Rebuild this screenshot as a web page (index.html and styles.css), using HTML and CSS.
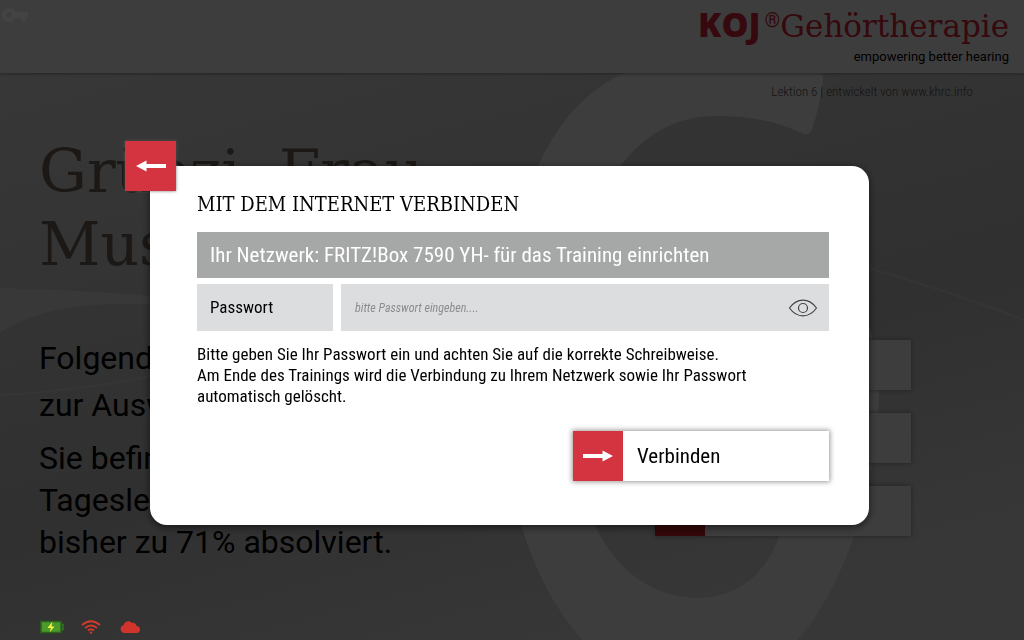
FILE: index.html
```html
<!DOCTYPE html>
<html lang="de">
<head>
<meta charset="utf-8">
<meta name="viewport" content="width=device-width, initial-scale=1">
<title>KOJ Gehörtherapie</title>
<link rel="stylesheet" href="styles.css">
</head>
<body>
<div class="page">
  <header class="header">
    <div class="logo"><span class="logo-mark">KOJ</span><span class="logo-reg">®</span><span class="logo-name">Gehörtherapie</span></div>
    <p class="tagline">empowering better hearing</p>
  </header>
  <main class="main">
    <svg class="backdrop" viewBox="0 0 1024 567" preserveAspectRatio="xMaxYMin slice" aria-hidden="true">
      <path d="M0 215Q80 217 150 223H600V231H150C70 229 30 240 0 260Z" fill="#fff" opacity=".5"/>
      <path d="M0 322Q80 318 150 303" fill="none" stroke="#fff" stroke-width="2" opacity=".3"/>
      <path d="M868 195Q950 218 1024 247" fill="none" stroke="#fff" stroke-width="2" opacity=".3"/>
      <path fill="#fff" d="M625 0H819Q824 1 823 7Q819 37 812 56Q809 63 804 61C770 45 740 43 716 43C640 43 590 110 575 220C620 170 670 150 730 150C820 150 879 220 879 320C879 440 815 620 695 620C575 620 495 470 502 290C505 130 550 32 625 0ZM697 525C760 525 792 470 792 380C792 300 760 250 700 250C640 250 580 300 580 380C580 460 630 525 697 525Z"/>
    </svg>
    <p class="lesson">Lektion 6 | entwickelt von www.khrc.info</p>
    <div class="columns">
      <section class="intro">
        <h1 class="greeting">Grüezi, Frau<br>Muster</h1>
        <p class="options">Folgende<br>zur Auswahl</p>
        <p class="progress">Sie befinden<br>Tageslektion<br>bisher zu 71% absolviert.</p>
      </section>
      <div class="tiles">
        <div class="tile"></div><div class="tile"></div><div class="tile"></div>
      </div>
    </div>
  </main>
</div>

<div class="overlay">
  <form class="dialog" role="dialog" aria-modal="true" aria-labelledby="dialog-title">
    <button class="back" type="button" aria-label="Zurück">
      <svg class="arrow" viewBox="0 0 32 12" aria-hidden="true"><path d="M1 6 11.500 .5V4H31V8H11.500V11.500Z"/></svg>
    </button>
    <h2 class="title" id="dialog-title">MIT DEM INTERNET VERBINDEN</h2>
    <p class="network">Ihr Netzwerk: FRITZ!Box 7590 YH- für das Training einrichten</p>
    <div class="field">
      <label class="field-label" for="password">Passwort</label>
      <div class="field-box">
        <input class="field-input" id="password" type="password" placeholder="bitte Passwort eingeben....">
        <button class="reveal" type="button" aria-label="Passwort anzeigen">
          <svg class="eye" viewBox="0 0 30 20" aria-hidden="true"><path d="M1.500 10C9-.5 21-.5 28.500 10 21 20.500 9 20.500 1.500 10Z"/><circle cx="15" cy="10" r="4.500"/></svg>
        </button>
      </div>
    </div>
    <p class="hint">Bitte geben Sie Ihr Passwort ein und achten Sie auf die korrekte Schreibweise.<br>Am Ende des Trainings wird die Verbindung zu Ihrem Netzwerk sowie Ihr Passwort<br>automatisch gelöscht.</p>
    <button class="connect" type="submit">
      <span class="connect-icon"><svg class="arrow" viewBox="0 0 32 12" aria-hidden="true"><path d="M31 6 20.500 .5V4H1V8H20.500V11.500Z"/></svg></span>
      <span class="connect-text">Verbinden</span>
    </button>
  </form>
</div>

<svg class="key" viewBox="0 0 28 16" aria-hidden="true"><path fill-rule="evenodd" d="M8 1a7 7 0 1 0 6.300 10H20v3h5v-3h2V5H14.300A7 7 0 0 0 8 1Zm0 4a3 3 0 1 1 0 6 3 3 0 0 1 0-6Z"/></svg>
<div class="status">
  <svg class="status-icon" viewBox="0 0 24 14" role="img" aria-label="Akku lädt"><rect x="1" y="1.500" width="20" height="11" fill="#4b9a2b" stroke="#2b611a" stroke-width="1.500"/><path d="M21.500 4.500h1.500v5h-1.500" fill="none" stroke="#2f7a1c" stroke-width="1.500"/><path d="M12.500 1.500 7.500 8H11L9.500 12.500 14.500 6.500H11.500Z" fill="#f4f23c"/></svg>
  <svg class="status-icon" viewBox="0 0 24 14" role="img" aria-label="WLAN"><g fill="none" stroke="#d23a2c" stroke-width="1.800"><path d="M3 5Q12-2.500 21 5"/><path d="M6 8Q12 3 18 8"/><path d="M9 10.500Q12 8.200 15 10.500"/></g><circle cx="12" cy="12.600" r="1.200" fill="#d23a2c"/></svg>
  <svg class="status-icon" viewBox="0 0 24 14" role="img" aria-label="Cloud"><path d="M6 13A4 4 0 0 1 5.500 5.200C6.500 1.500 11-.2 14 3 16 2.300 18.500 3.800 18.500 6A3.500 3.500 0 0 1 18.500 13Z" fill="#d0342a"/></svg>
</div>
</body>
</html>
```
FILE: styles.css
```css
* { box-sizing: border-box; }
body, h1, h2, p { margin: 0; font-weight: 400; }
body { font-family: Roboto, "Noto Sans", sans-serif; color: #000; background: #e0e0e0; }
button, input { border: 0; border-radius: 0; padding: 0; font: inherit; color: inherit; background: none; }
button { cursor: pointer; }

.page { height: 100vh; display: flex; flex-direction: column; overflow: hidden; isolation: isolate; }

.header {
  display: flex; flex-direction: column; align-items: flex-end;
  height: 73px; padding: 4px 15px 0; background: #fff;
  box-shadow: 0 1px 3px #999; z-index: 1;
}
.logo { display: flex; align-items: baseline; height: 44px; color: #dc2838; line-height: 40px; }
.logo-mark { font-family: "Open Sans", sans-serif; font-weight: 800; font-size: 34px; }
.logo-reg { margin-left: 4px; font-size: 20px; align-self: flex-start; line-height: 32px; }
.logo-name { font-family: "Roboto Slab", "DejaVu Serif", serif; font-size: 31px; }
.tagline { font-size: 13px; line-height: 18px; }

.main {
  position: relative; flex: 1;
  background: linear-gradient(165deg, #e6e6e6 0%, #d8d8d8 25%, #c8c8c8 55%, #e4e4e4 85%);
}
.backdrop { position: absolute; inset: 0; width: 100%; height: 100%; }
.lesson {
  position: relative; padding: 10px 51px 0 0; text-align: right;
  font: 300 13px/17px "Roboto Condensed", Roboto, sans-serif; color: #555;
}
.columns { position: relative; display: flex; justify-content: space-between; padding: 32px 113px 0 39px; }
.greeting {
  font-family: "Roboto Slab", "DejaVu Serif", serif;
  padding-top: 3px; font-size: 60px; line-height: 73px; color: #756459;
}
.intro { white-space: nowrap; }
.options { margin-top: 54px; font-size: 32px; line-height: 47px; }
.progress { margin-top: 8px; font-size: 32px; line-height: 42px; }
.tiles { display: flex; flex-direction: column; gap: 23px; width: 256px; padding-top: 208px; }
.tile { height: 50px; background: #fff; border-left: 50px solid #d7202c; box-shadow: 0 0 5px #888; }

.overlay {
  position: fixed; inset: 0; display: flex; justify-content: center; align-items: flex-start;
  padding: 166px 155px 0 150px; background: rgba(0, 0, 0, .76);
}
.dialog {
  position: relative; flex: 1; display: flex; flex-direction: column;
  padding: 24px 40px 44px 47px; border-radius: 17px; background: #fff;
  box-shadow: 0 2px 8px rgba(0, 0, 0, .6);
  font-family: "Roboto Condensed", Roboto, sans-serif;
}
.back {
  position: absolute; top: -25px; left: -25px; width: 51px; height: 50px;
  display: grid; place-items: center; background: #d3343f;
  box-shadow: 0 0 3px rgba(90, 90, 90, .8);
}
.arrow { width: 32px; height: 12px; fill: #fff; }
.title { font-family: "Roboto Slab", "DejaVu Serif Condensed", serif; font-size: 20px; line-height: 28px; }
.network { margin-top: 14px; padding: 0 13px; font-size: 21px; line-height: 46px; color: #fff; background: #a6a8a7; }
.field { display: flex; gap: 8px; height: 47px; margin-top: 6px; }
.field-label { width: 136px; padding-left: 13px; font-size: 17px; line-height: 47px; background: #dcdddf; }
.field-box { flex: 1; display: flex; align-items: center; padding: 0 11px 0 14px; background: #dcdddf; }
.field-input { flex: 1; min-width: 0; height: 100%; outline: 0; font-size: 12px; }
.field-input::placeholder { font-style: italic; color: #8c8d8f; opacity: 1; }
.reveal { display: grid; place-items: center; }
.eye { width: 30px; height: 20px; fill: none; stroke: #444; stroke-width: 1.2; }
.hint { margin-top: 13px; font-size: 17px; line-height: 21px; }
.connect {
  align-self: flex-end; display: flex; width: 256px; height: 50px; margin-top: 24px;
  background: #fff; box-shadow: 0 0 5px 1px #999; text-align: left;
}
.connect-icon { display: grid; place-items: center; width: 50px; height: 50px; background: #d3343f; }
.connect-text { padding-left: 14px; font-size: 21px; line-height: 50px; }

.key { position: fixed; top: 7px; left: 1px; width: 28px; height: 16px; fill: #434343; }
.status { position: fixed; left: 40px; bottom: 6px; display: flex; gap: 15px; }
.status-icon { width: 24px; height: 14px; }
```
